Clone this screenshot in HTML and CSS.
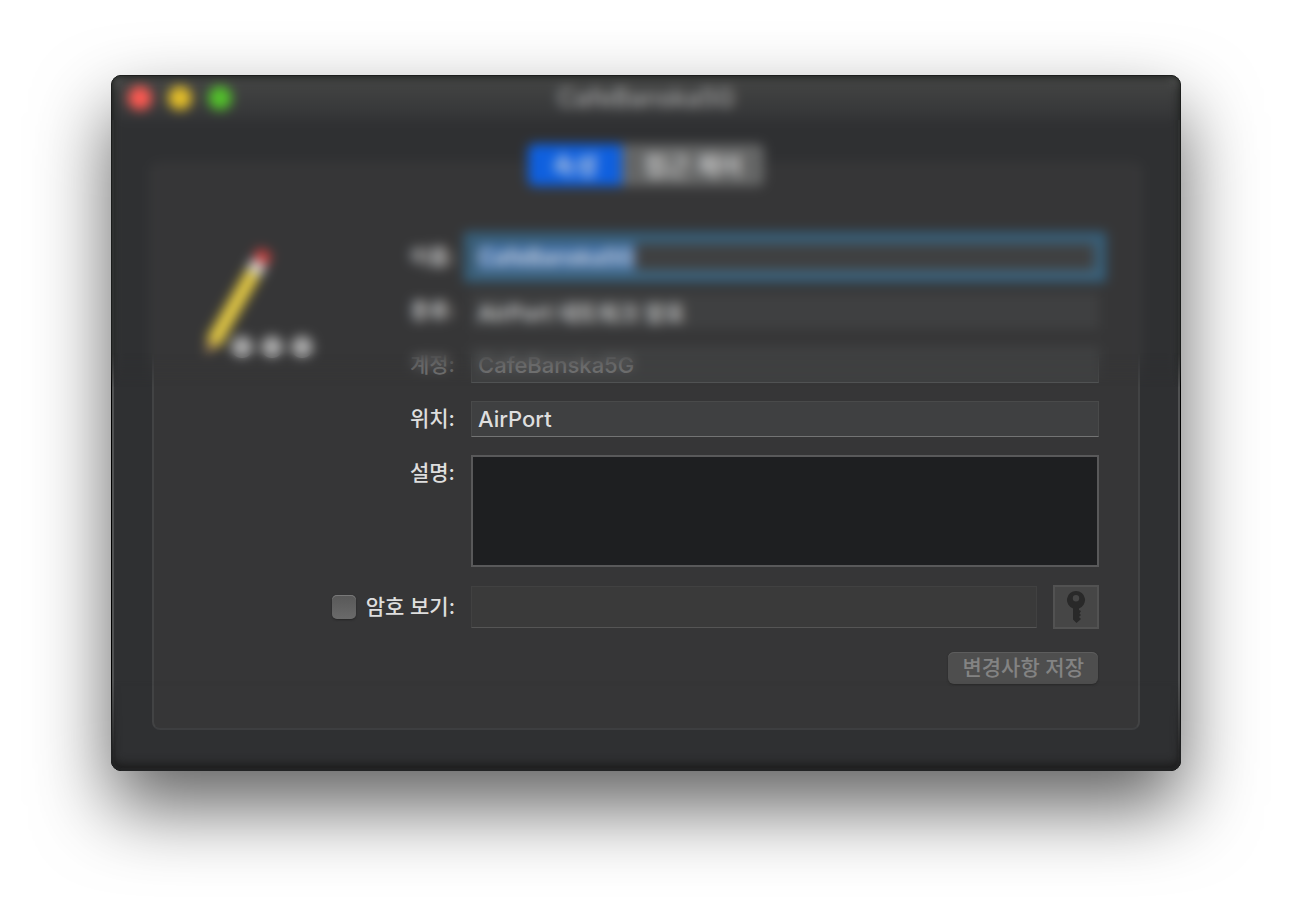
FILE: index.html
```html
<!DOCTYPE html>
<html lang="ko">
<head>
    <meta charset="UTF-8">
    <meta name="viewport" content="width=device-width, initial-scale=1.0">
    <title>CafeBanska5G</title>
    <link rel="stylesheet" href="styles.css">
</head>
<body>
    <main class="window">
        <header class="titlebar">
            <div class="lights">
                <button type="button" class="light close" aria-label="닫기"></button>
                <button type="button" class="light minimize" aria-label="최소화"></button>
                <button type="button" class="light zoom" aria-label="확대"></button>
            </div>
            <h1 class="title">CafeBanska5G</h1>
        </header>

        <section class="panel">
            <div class="tabs">
                <button type="button" class="tab active">속성</button>
                <button type="button" class="tab">접근 제어</button>
            </div>

            <div class="content">
                <div class="side">
                    <svg class="pencil" width="116" height="116" viewBox="0 0 116 116" aria-hidden="true">
                        <g transform="translate(4 110) rotate(30)">
                            <path d="M0 0 L-7 -17 H7 Z" fill="#b08d5a"/>
                            <rect x="-8" y="-96" width="16" height="82" fill="#d9bd3a"/>
                            <rect x="-2" y="-96" width="4" height="80" fill="#ecd75a"/>
                            <rect x="-8" y="-108" width="16" height="13" fill="#d0d0d0"/>
                            <rect x="-8" y="-120" width="16" height="13" rx="4" fill="#c8403f"/>
                        </g>
                        <g fill="#a8a8a8">
                            <circle cx="40" cy="102" r="11"/>
                            <circle cx="70" cy="102" r="11"/>
                            <circle cx="100" cy="102" r="11"/>
                        </g>
                    </svg>
                </div>

                <form class="form">
                    <div class="row">
                        <label for="name">이름:</label>
                        <input id="name" class="field focused" type="text" value="CafeBanska5G">
                    </div>
                    <div class="row">
                        <label for="kind">종류:</label>
                        <input id="kind" class="field plain" type="text" value="AirPort 네트워크 암호" readonly>
                    </div>
                    <div class="row disabled">
                        <label for="account">계정:</label>
                        <input id="account" class="field" type="text" value="CafeBanska5G" disabled>
                    </div>
                    <div class="row">
                        <label for="where">위치:</label>
                        <input id="where" class="field" type="text" value="AirPort">
                    </div>
                    <div class="row top">
                        <label for="comments">설명:</label>
                        <textarea id="comments" class="comments"></textarea>
                    </div>
                    <div class="row">
                        <label class="check" for="show">
                            <input id="show" type="checkbox">암호 보기:
                        </label>
                        <input class="field password" type="text" aria-label="암호" disabled>
                        <button type="button" class="key" aria-label="암호 생성">
                            <svg width="20" height="32" viewBox="0 0 20 32" aria-hidden="true">
                                <path fill="#292929" fill-rule="evenodd" d="M10 0a9 9 0 0 1 3 17.500V19l2 1-1.500 2.500 1.500 1.500-2 2 2 2-4.500 4L7 28.500V17.500A9 9 0 0 1 10 0zM10 4a3.200 3.200 0 1 0 0 6.400A3.200 3.200 0 0 0 10 4z"/>
                            </svg>
                        </button>
                    </div>
                    <div class="actions">
                        <button type="submit" class="save" disabled>변경사항 저장</button>
                    </div>
                </form>
            </div>
        </section>

        <div class="haze haze-top"></div>
        <div class="haze haze-bottom"></div>
    </main>
</body>
</html>
```
FILE: styles.css
```css
* {
    box-sizing: border-box;
}
body {
    margin: 0;
    min-height: 100vh;
    padding: 75px 111px;
    background-color: #fff;
    color: #dedede;
    font-family: Inter, "Noto Sans CJK KR", sans-serif;
    font-size: 21px;
    font-weight: 500;
}
button, input, textarea {
    margin: 0;
    font-family: inherit;
    font-size: inherit;
    font-weight: inherit;
    color: inherit;
}
.window {
    position: relative;
    padding-bottom: 40px;
    border: 1px solid #000;
    border-radius: 10px;
    background-color: #2f3032;
    box-shadow: inset 0 0 0 2px #505152, 0 36px 76px rgba(0,0,0,0.62);
}
.titlebar {
    display: grid;
    grid-template-columns: 1fr auto 1fr;
    align-items: center;
    height: 44px;
    padding: 0 16px;
    border-radius: 10px 10px 0 0;
    background-image: linear-gradient(#454645, #343537);
}
.lights {
    display: flex;
    gap: 16px;
}
.light {
    width: 24px;
    height: 24px;
    padding: 0;
    border: 0;
    border-radius: 50%;
}
.close { background-color: #ff5a52; }
.minimize { background-color: #e6c029; }
.zoom { background-color: #53c22b; }
.title {
    margin: 0;
    font-size: 25px;
    font-weight: 500;
    color: #aaa;
}
.panel {
    margin: 42px 40px 0;
    padding-bottom: 44px;
    border: 2px solid #424344;
    border-top-color: #373839;
    border-bottom-color: #3d3e40;
    border-radius: 8px;
    background-color: #363637;
}
.tabs {
    display: flex;
    justify-content: center;
    margin-top: -20px;
}
.tab {
    height: 42px;
    padding: 0 22px 2px;
    border: 0;
    border-radius: 0 6px 6px 0;
    background-color: #656666;
    font-size: 25px;
}
.tab.active {
    padding: 0 24px 2px;
    border-radius: 6px 0 0 6px;
    background-color: #0f60df;
}
.content {
    display: flex;
    padding: 53px 39px 0 38px;
}
.side {
    flex: 0 0 140px;
    padding: 6px 10px;
}
.pencil {
    display: block;
    overflow: visible;
}
.form {
    flex: 1;
    display: flex;
    flex-direction: column;
    gap: 18px;
}
.row {
    display: flex;
    align-items: center;
    gap: 16px;
}
.row.top {
    align-items: flex-start;
}
.row label {
    flex: 0 0 123px;
    line-height: 36px;
    text-align: right;
    white-space: nowrap;
}
.row.disabled {
    color: #858585;
}
.field {
    flex: 1;
    min-width: 0;
    height: 36px;
    padding: 0 6px;
    border: 1px solid #494a4a;
    border-bottom-color: #737474;
    border-radius: 0;
    outline: 0;
    background-color: #3f4041;
    font-size: 22px;
}
.row.disabled .field {
    border-bottom-color: #545657;
}
.plain {
    border-color: #3f4041;
}
/* selected text and focus ring */
.focused {
    background-image: linear-gradient(#3f6fa8, #3f6fa8);
    background-repeat: no-repeat;
    background-position: 5px 0;
    background-size: 158px 100%;
    box-shadow: 0 0 0 7px #34617f, inset 0 0 0 4px #3c627b;
}
.comments {
    flex: 1;
    min-width: 0;
    height: 112px;
    border: 2px solid #59595a;
    border-radius: 0;
    outline: 0;
    resize: none;
    background-color: #1e1f21;
}
.row .check {
    display: flex;
    align-items: center;
    justify-content: space-between;
}
.check input {
    appearance: none;
    width: 24px;
    height: 24px;
    border-radius: 5px;
    background-image: linear-gradient(#585858, #6a6a6a);
    box-shadow: inset 0 1px #797979, 0 1px 2px #252525;
}
.row .password {
    height: 42px;
    border-color: #414141;
    border-bottom-color: #555;
    background-color: #3a3a3a;
}
.key {
    display: flex;
    align-items: center;
    justify-content: center;
    width: 46px;
    height: 44px;
    padding: 0;
    border: 2px solid #525252;
    background-color: #464646;
}
.actions {
    display: flex;
    justify-content: flex-end;
    padding: 5px 1px 0 0;
}
.save {
    height: 32px;
    padding: 0 14px;
    border: 0;
    border-radius: 6px;
    background-color: #4e4e4e;
    box-shadow: inset 0 1px #5d5d5d, 0 1px 2px #292929;
    line-height: 30px;
    color: #838383;
}
/* frosted strips that fade out towards the middle of the window */
.haze {
    position: absolute;
    left: -1px;
    right: -1px;
    pointer-events: none;
}
.haze-top {
    top: -1px;
    height: 330px;
    border-radius: 10px 10px 0 0;
    box-shadow: inset 0 0 7px 1px #1c1f1c;
    backdrop-filter: blur(6px);
    mask-image: linear-gradient(#000 278px, transparent 312px);
}
.haze-bottom {
    bottom: -1px;
    height: 90px;
    border-radius: 0 0 10px 10px;
    box-shadow: inset 0 0 2px 3px #222324, inset 0 -6px 10px 1px #1c1c1c;
    mask-image: linear-gradient(transparent, #000 70px);
}
```
